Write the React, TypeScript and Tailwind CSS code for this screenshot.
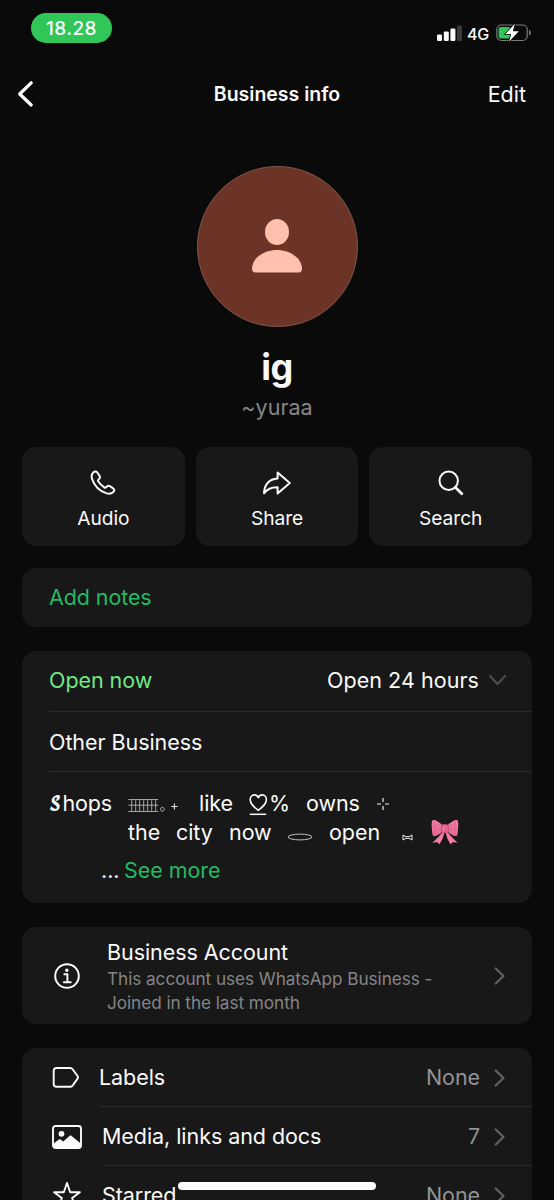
import React from "react";

type IconProps = { className?: string };

const Chevron = ({ className = "" }: IconProps) => (
  <svg className={className} width="12" height="18" viewBox="0 0 12 18" fill="none" stroke="#626264" strokeWidth="2.2" strokeLinecap="round" strokeLinejoin="round">
    <path d="M1.700 1.500 9.500 9l-7.800 7.500" />
  </svg>
);

const PhoneIcon = () => (
  <svg width="26" height="26" viewBox="0 0 26 26" fill="none" stroke="#fafafa" strokeWidth="2" strokeLinejoin="round">
    <path d="M3.500 2.300C4.900 1 6.500 1.200 7.500 2.800l2 3.100c.7 1.100.6 2-.2 2.800l-.9.9c-.6.6-.6 1.200-.1 1.900 1.700 2.400 3.500 4.200 5.900 5.900.7.5 1.300.5 1.900-.1l.8-.8c.9-.9 1.800-1 2.900-.3l3 1.900c1.700 1.100 1.900 2.600.5 4-1.800 1.700-3.900 2.100-6.600 1.300C9.800 21.300 4.200 15.700 2 8.800 1.200 6.100 1.600 4.100 3.500 2.300Z" />
  </svg>
);

const ShareIcon = () => (
  <svg width="30" height="26" viewBox="0 0 30 26" fill="none" stroke="#fafafa" strokeWidth="2" strokeLinejoin="round">
    <path d="M15.600 2.500 27.800 13 15.600 23.500v-6.200C9.800 17.100 5.500 18.800 2 23.300 2.500 14.800 7 9.100 15.600 8.500V2.500Z" />
  </svg>
);

const SearchIcon = () => (
  <svg width="26" height="26" viewBox="0 0 26 26" fill="none" stroke="#fafafa">
    <circle cx="10.700" cy="10.700" r="9.200" strokeWidth="2" />
    <path d="m17.500 17.500 6.300 6.300" strokeWidth="2.800" strokeLinecap="round" />
  </svg>
);

const InfoIcon = () => (
  <svg width="28" height="28" viewBox="0 0 28 28" fill="none" stroke="#fafafa">
    <circle cx="14" cy="14" r="11.800" strokeWidth="2" />
    <circle cx="13.800" cy="8.200" r="1.700" fill="#fafafa" stroke="none" />
    <path d="M11.300 12.300h3.100v7.800M10.800 20.300h7" strokeWidth="1.900" strokeLinecap="round" strokeLinejoin="round" />
  </svg>
);

const LabelIcon = () => (
  <svg width="30" height="24" viewBox="0 0 30 24" fill="none" stroke="#fafafa" strokeWidth="1.900" strokeLinejoin="round">
    <path d="M4.500 2.500h13.700c1 0 1.800.4 2.400 1.200l5.100 7.100c.5.700.5 1.400 0 2.100l-5.100 7.200c-.6.8-1.400 1.200-2.400 1.200H4.500c-1.800 0-2.800-1-2.800-2.800V5.300c0-1.800 1-2.800 2.800-2.800Z" transform="translate(0 -.5)" />
  </svg>
);

const MediaIcon = () => (
  <svg width="30" height="24" viewBox="0 0 30 24" fill="none">
    <rect x="1" y="1" width="28" height="22" rx="2.500" stroke="#fafafa" strokeWidth="1.900" />
    <circle cx="9.500" cy="8.800" r="2.900" fill="#fafafa" />
    <path d="M1.500 18.500 7 14.500c.6-.4 1.100-.4 1.700 0l2.500 2 6.300-5.500c.7-.6 1.400-.6 2.100 0l8.900 7.300v2.200c0 1.500-.8 2.300-2.300 2.300H3.800c-1.500 0-2.300-.8-2.300-2.300v-2Z" fill="#fafafa" />
  </svg>
);

const StarIcon = () => (
  <svg width="30" height="30" viewBox="0 0 30 30" fill="none" stroke="#fafafa" strokeWidth="1.900" strokeLinejoin="round">
    <path d="m15 2 3.200 9.300h9.700L20.200 17.100l2.800 9.300-8-5.500-8 5.500 2.800-9.300-7.700-5.800h9.700L15 2Z" />
  </svg>
);

const GridGlyph = () => (
  <svg width="52" height="20" viewBox="0 0 52 20" fill="none" stroke="#c4c4c4" strokeWidth=".8">
    <path d="M.3 3.500h30M.3 9.200h30M.3 15.500h30M3.700 3.500v12M7.700 3.500v12M11.700 3.500v12M15.700 3.500v12M19.700 3.500v12M23.700 3.500v12M27.700 3.500v12" />
    <circle cx="34.400" cy="13.300" r="1.900" />
    <path d="M43.300 10.500h6.200M46.400 7.400v6.200" stroke="#eee" strokeWidth="1.100" />
  </svg>
);

const HeartGlyph = () => (
  <svg width="20" height="23" viewBox="0 0 20 23" fill="none" stroke="#fafafa" strokeWidth="1.600" strokeLinejoin="round">
    <path d="M9.300 17.400C5 13.900 1.200 11 1.200 6.800c0-2.900 1.800-4.900 4.200-4.900 1.800 0 3.100 1 3.900 2.700.8-1.700 2.100-2.700 3.900-2.700 2.400 0 4.200 2 4.200 4.900 0 4.200-3.800 7.100-8.100 10.600Z" />
    <path d="M.8 21.300h16.400" strokeWidth="1.500" />
  </svg>
);

const BowIcon = () => (
  <svg width="28" height="26" viewBox="0 0 28 26">
    <defs>
      <linearGradient id="bow" x1="0" y1="0" x2="0" y2="1">
        <stop offset="0" stopColor="#f47ba5" />
        <stop offset="1" stopColor="#e66b96" />
      </linearGradient>
    </defs>
    <path d="M11.500 12.500C9 17 5 20.500 1.300 23.800l4.700-.9 2.300 2.300c2.700-3.500 4.300-7 5-12.200ZM16.500 12.500c2.500 4.500 6.500 8 10.200 11.300l-4.700-.9-2.300 2.300c-2.700-3.500-4.300-7-5-12.200Z" fill="#f57ca6" />
    <path d="M11.500 6.200C8.500 3.300 4.200.3 2 1.100.1 1.900.7 7.500 1 11c.2 3.900.5 6.200 2.300 6.100 2.500-.2 6-2.400 8.500-5.200ZM16.500 6.200c3-2.900 7.300-5.900 9.500-5.100 1.900.8 1.300 6.400 1 9.900-.2 3.900-.5 6.200-2.300 6.100-2.500-.2-6-2.400-8.500-5.200Z" fill="url(#bow)" />
    <path d="m11 7.500-4.500-1.800M11 9.500l-4.500 1.800M17 7.500l4.500-1.800M17 9.500l4.500 1.800M3.500 3.500c1 3.500 1 7.500.4 11.500M24.500 3.500c-1 3.500-1 7.500-.4 11.500" stroke="#d2608a" strokeWidth=".8" fill="none" strokeLinecap="round" />
    <rect x="10.500" y="5.500" width="7" height="8.500" rx="2.300" fill="#e5608f" stroke="#b84c74" strokeWidth=".7" />
    <path d="M12.700 7v4.800" stroke="#f58bb0" strokeWidth="1" strokeLinecap="round" />
  </svg>
);

const StatusBar = () => (
  <div className="flex h-[60px] shrink-0 items-start justify-between pl-[31px] pr-[22px] pt-[13px]">
    <div className="flex h-[30px] w-[81px] items-center justify-center rounded-full bg-[#31c758] text-[19px] font-medium leading-none tracking-[0.4px]">
      18.28
    </div>
    <div className="mt-[10px] flex h-[20px] items-center">
      <svg width="26" height="18" viewBox="0 0 26 18" fill="#fafafa">
        <rect x="0" y="10.500" width="5" height="6.500" rx="1.200" />
        <rect x="6.800" y="7.500" width="5" height="9.500" rx="1.200" />
        <rect x="13.400" y="4.500" width="5" height="12.500" rx="1.200" />
        <rect x="20" y="1.500" width="5" height="15.500" rx="1.200" fill="#3a3a3b" />
      </svg>
      <span className="ml-[4px] w-[24px] pt-[1px] text-[16px] font-medium leading-none tracking-[-0.3px]">4G</span>
      <svg className="ml-[5px]" width="36" height="20" viewBox="0 0 36 20">
        <rect x=".8" y="2" width="30.400" height="15.500" rx="4.500" fill="none" stroke="#7b7b7c" strokeWidth="1.200" />
        <rect x="2.600" y="4" width="12.200" height="11.600" rx="2.300" fill="#31c758" />
        <path d="M33 7c1.300.4 1.800 1.400 1.800 2.700S34.300 12 33 12.400Z" fill="#7b7b7c" />
        <path d="M18.800.8 9.500 11h5.700l-2.200 7.800 9.800-10.500h-5.900L18.800.8Z" fill="#fff" stroke="#0a0a0a" strokeWidth="1.500" paintOrder="stroke" />
      </svg>
    </div>
  </div>
);

const Action = ({ icon, label }: { icon: React.ReactNode; label: string }) => (
  <div className="flex h-full flex-1 flex-col items-center rounded-[14px] bg-[#181818] pt-[22px]">
    <div className="flex h-[28px] items-center">{icon}</div>
    <span className="mt-[9px] text-[19.200px] leading-[25px]">{label}</span>
  </div>
);

export default function App() {
  return (
    <div className="relative flex h-[1200px] w-[554px] flex-col overflow-hidden bg-[#0a0a0a] font-['Inter',sans-serif] text-[#fafafa]">
      <StatusBar />
      <header className="flex h-[68px] shrink-0 items-center pl-[17px] pr-[28px]">
        <div className="w-[100px]">
          <svg width="18" height="28" viewBox="0 0 18 28" fill="none" stroke="#fff" strokeWidth="3.200" strokeLinecap="round" strokeLinejoin="round">
            <path d="M14.200 2.800 2.700 14l11.500 11" />
          </svg>
        </div>
        <h1 className="flex-1 pl-[11px] pt-[2px] text-center text-[19.500px] font-semibold">Business info</h1>
        <span className="w-[100px] text-right text-[21.500px]">Edit</span>
      </header>

      <section className="flex h-[319px] shrink-0 flex-col items-center pt-[38px]">
        <div className="flex size-[161px] shrink-0 items-center justify-center rounded-full border-[1.500px] border-[#81564a] bg-[#6b3426] pb-[2px]">
          <svg width="50" height="54" viewBox="0 0 50 54" fill="#ffc0ae">
            <ellipse cx="25" cy="13" rx="12" ry="13" />
            <path d="M3.600 53.500C1.300 53.500 0 52.100 0 49.800 0 39.400 11.500 31 25 31s25 8.400 25 18.800c0 2.300-1.300 3.700-3.600 3.700Z" />
          </svg>
        </div>
        <h2 className="mt-[17px] text-[36px] font-bold leading-[46px] tracking-[-0.6px]">ig</h2>
        <p className="mt-[3px] text-[21.500px] leading-[28px] text-[#868688]">~yuraa</p>
      </section>

      <main className="flex shrink-0 flex-col px-[22px] tracking-[-0.06px]">
        <div className="flex h-[99px] gap-[11px]">
          <Action icon={<PhoneIcon />} label="Audio" />
          <Action icon={<ShareIcon />} label="Share" />
          <Action icon={<SearchIcon />} label="Search" />
        </div>

        <div className="mt-[22px] flex h-[59px] items-center rounded-[14px] bg-[#181818] pl-[27px] text-[21.500px] tracking-[-0.1px] text-[#25ba64]">Add notes</div>

        <section className="mt-[24px] h-[252px] rounded-[14px] bg-[#181818] pl-[27px] text-[21.500px]">
          <div className="flex h-[61px] items-center border-b border-[#2b2b2b] pb-[1px] pr-[25px]">
            <span className="flex-1 text-[#6fe883]">Open now</span>
            <span className="tracking-[0.05px]">Open 24 hours</span>
            <svg className="ml-[9px]" width="19" height="14" viewBox="0 0 19 14" fill="none" stroke="#4b4b4c" strokeWidth="2.300" strokeLinecap="round" strokeLinejoin="round">
              <path d="M2 2 9.500 10 17 2" />
            </svg>
          </div>
          <div className="flex h-[60px] items-center border-b border-[#2b2b2b] pt-[1px]">Other Business</div>
          <div className="mt-[17px] flex h-[29px] items-center whitespace-nowrap">
            <span className="w-[79px] tracking-[-0.2px]">
              <span className="relative -top-px inline-block w-[13.500px] origin-left scale-x-75 font-['DejaVu_Math_TeX_Gyre','Liberation_Serif',serif] text-[18px] leading-none">𝓢</span>hops
            </span>
            <span className="w-[71px] pt-[4px]"><GridGlyph /></span>
            <span className="w-[50px]">like</span>
            <span className="w-[20px] pt-[2px]"><HeartGlyph /></span>
            <span className="w-[37px]">%</span>
            <span className="w-[69px]">owns</span>
            <svg width="16" height="16" viewBox="0 0 16 16" stroke="#eee" strokeWidth="1.200">
              <path d="M2 8h4M10 8h4M8 2v4M8 10v4" />
            </svg>
          </div>
          <div className="flex h-[29px] items-center whitespace-nowrap pl-[79px]">
            <span className="w-[48px]">the</span>
            <span className="w-[53px]">city</span>
            <span className="w-[58px]">now</span>
            <svg className="mt-[8px]" width="26" height="8" viewBox="0 0 26 8" fill="none" stroke="#d0d0d0" strokeWidth=".9">
              <ellipse cx="13" cy="4" rx="12" ry="2.900" />
            </svg>
            <span className="ml-[16px] w-[73px]">open</span>
            <svg className="mt-[9px]" width="11" height="7" viewBox="0 0 11 7" fill="none" stroke="#eee" strokeWidth="1">
              <path d="M1 1v5l3-1.700h3L10 6V1L7 2.700H4Z" />
            </svg>
            <span className="ml-[18px] pb-[2px]"><BowIcon /></span>
          </div>
          <div className="mt-[9px] flex h-[29px] items-center pl-[52px]">
            <span className="w-[23px]">...</span>
            <span className="text-[#25ba64]">See more</span>
          </div>
        </section>

        <section className="mt-[24px] flex h-[97px] items-center rounded-[14px] bg-[#181818] pl-[31px] pr-[26px]">
          <InfoIcon />
          <div className="ml-[26px] flex-1">
            <p className="text-[21.500px] leading-[30px]">Business Account</p>
            <p className="whitespace-nowrap text-[17.200px] leading-[24px] text-[#858587]">This account uses WhatsApp Business -<br />Joined in the last month</p>
          </div>
          <Chevron />
        </section>

        <section className="mt-[24px] h-[190px] rounded-[14px] bg-[#181818] text-[21.500px]">
          <div className="flex h-[58px] items-center pl-[30px] pr-[26px] pt-[1px]">
            <LabelIcon />
            <span className="flex-1 pl-[17px]">Labels</span>
            <span className="text-[#939395]">None</span>
            <Chevron className="ml-[14px]" />
          </div>
          <div className="ml-[77px] h-px bg-[#2b2b2b]" />
          <div className="flex h-[58px] items-center pl-[30px] pr-[26px] pt-[1px]">
            <MediaIcon />
            <span className="flex-1 pl-[20px]">Media, links and docs</span>
            <span className="text-[#939395]">7</span>
            <Chevron className="ml-[14px]" />
          </div>
          <div className="ml-[80px] h-px bg-[#2b2b2b]" />
          <div className="flex h-[58px] items-center pl-[30px] pr-[26px] pt-[1px]">
            <StarIcon />
            <span className="flex-1 pl-[20px]">Starred</span>
            <span className="text-[#939395]">None</span>
            <Chevron className="ml-[14px]" />
          </div>
        </section>
      </main>
      <div className="absolute left-[178px] top-[1182px] h-[8px] w-[198px] rounded-full bg-white" />
    </div>
  );
}
